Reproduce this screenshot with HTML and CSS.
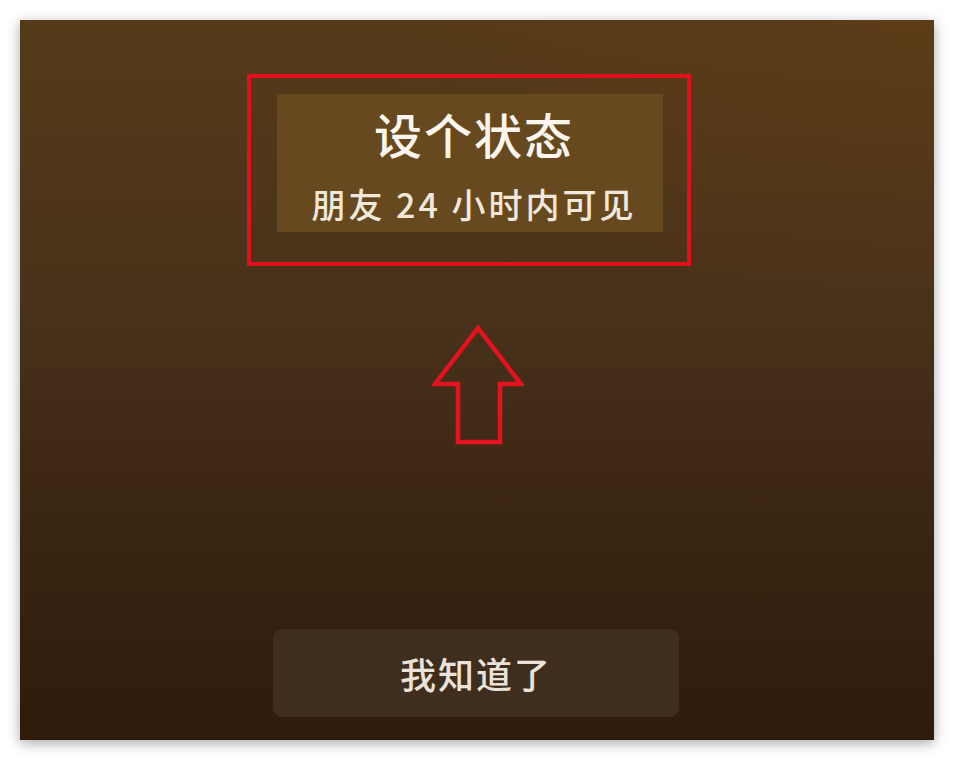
FILE: index.html
```html
<!DOCTYPE html>
<html lang="zh-CN">
<head>
    <meta charset="UTF-8">
    <meta name="viewport" content="width=device-width, initial-scale=1.0">
    <title>设个状态</title>
    <link rel="stylesheet" href="styles.css">
</head>
<body>

    <div class="screen">
        <div class="highlight">
            <div class="tip">
                <div class="tip-title">设个状态</div>
                <div class="tip-sub">朋友 24 小时内可见</div>
            </div>
        </div>

        <svg class="arrow" width="92" height="120" viewBox="0 0 92 120">
            <polygon points="46,3 89,59 68,59 68,117 26,117 26,59 3,59"
                     fill="none" stroke="#e6121f" stroke-width="4.5" stroke-linejoin="miter"/>
        </svg>

        <div class="ok-btn">我知道了</div>
    </div>

</body>
</html>
```

FILE: styles.css
```css
body {
    margin: 0;
    background: #fff;
    font-family: "Noto Sans CJK SC", "Noto Sans", sans-serif;
}
.screen {
    width: 914px;
    height: 720px;
    margin: 20px;
    padding-top: 54px;
    box-sizing: border-box;
    display: flex;
    flex-direction: column;
    background:
        radial-gradient(ellipse 60% 40% at 100% 0%, rgba(110, 62, 18, 0.3), transparent),
        linear-gradient(to bottom, #563b19 0%, #47301a 45%, #3a2512 70%, #2e1b0b 100%);
    box-shadow: 0 3px 12px rgba(0, 0, 0, 0.35);
}
.highlight {
    width: 444px;
    height: 192px;
    margin-left: 227px;
    border: 4px solid #e3101c;
    box-sizing: border-box;
}
.tip {
    width: 386px;
    height: 138px;
    margin: 16px 0 0 26px;
    padding: 15px 0 0 8px;
    box-sizing: border-box;
    background: #66491f;
    display: flex;
    flex-direction: column;
    align-items: center;
}
.tip-title {
    font-size: 48px;
    line-height: 48px;
    font-weight: 500;
    letter-spacing: 2px;
    color: #fcf6ee;
}
.tip-sub {
    margin-top: 30px;
    font-size: 34px;
    line-height: 34px;
    font-weight: 500;
    letter-spacing: 3px;
    color: #f1e8dc;
}
.arrow {
    display: block;
    margin: 59px 0 0 412px;
}
.ok-btn {
    width: 406px;
    height: 88px;
    margin: 184px 0 0 253px;
    border-radius: 9px;
    background: #3f2d1e;
    color: #ebe3da;
    font-size: 36px;
    font-weight: 500;
    letter-spacing: 2px;
    display: flex;
    align-items: center;
    justify-content: center;
}
```
